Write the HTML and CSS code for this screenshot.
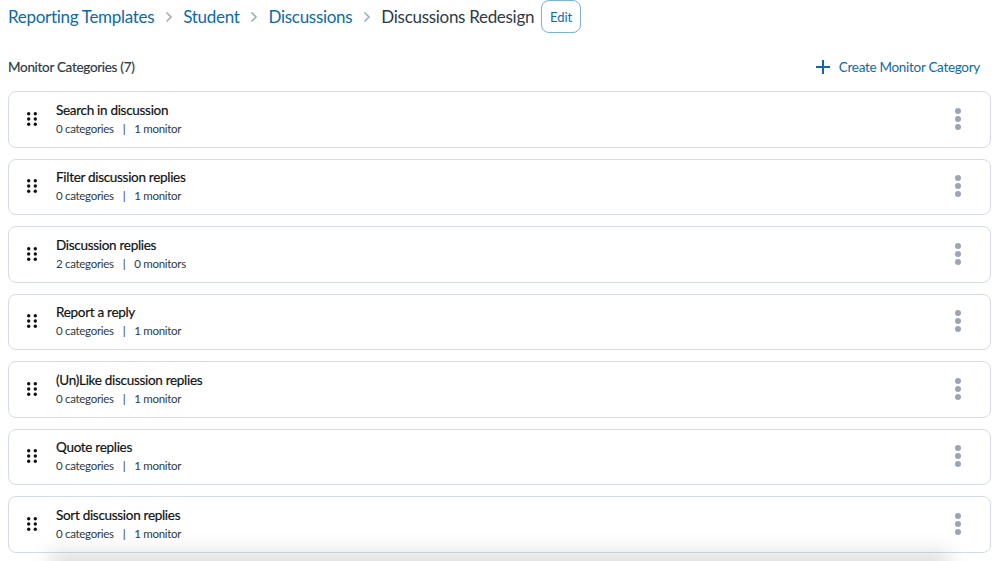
FILE: index.html
```html
<!DOCTYPE html>
<html>
<head>
  <title>Discussions Redesign</title>
  <link rel="stylesheet" href="styles.css">
</head>
<body>
  <div class="breadcrumbs">
    <a class="crumb" href="#">Reporting Templates</a>
    <svg class="chevron" width="8" height="12" viewBox="0 0 8 12"><path d="M1.5 1.5 6 6l-4.5 4.500" fill="none" stroke="#a3acb5" stroke-width="1.6"/></svg>
    <a class="crumb" href="#">Student</a>
    <svg class="chevron" width="8" height="12" viewBox="0 0 8 12"><path d="M1.5 1.5 6 6l-4.5 4.500" fill="none" stroke="#a3acb5" stroke-width="1.6"/></svg>
    <a class="crumb" href="#">Discussions</a>
    <svg class="chevron" width="8" height="12" viewBox="0 0 8 12"><path d="M1.5 1.5 6 6l-4.5 4.500" fill="none" stroke="#a3acb5" stroke-width="1.6"/></svg>
    <span class="crumb current">Discussions Redesign</span>
    <button class="edit-btn">Edit</button>
  </div>

  <div class="list-header">
    <span class="list-title">Monitor Categories (7)</span>
    <a class="create-link" href="#">
      <svg width="16" height="16" viewBox="0 0 16 16"><path d="M8 1v14M1 8h14" stroke="#0b6ba8" stroke-width="2" fill="none"/></svg>
      Create Monitor Category
    </a>
  </div>

  <div class="category-list">
    <div class="category-row">
      <svg class="drag" width="10" height="14" viewBox="0 0 10 14"><g fill="#111"><circle cx="1.7" cy="1.7" r="1.7"/><circle cx="8.3" cy="1.7" r="1.7"/><circle cx="1.7" cy="7" r="1.7"/><circle cx="8.3" cy="7" r="1.7"/><circle cx="1.7" cy="12.3" r="1.7"/><circle cx="8.3" cy="12.3" r="1.7"/></g></svg>
      <div class="category-info">
        <div class="category-name">Search in discussion</div>
        <div class="category-meta"><span>0 categories</span><span class="sep">|</span><span>1 monitor</span></div>
      </div>
      <div class="kebab"><i></i><i></i><i></i></div>
    </div>
    <div class="category-row">
      <svg class="drag" width="10" height="14" viewBox="0 0 10 14"><g fill="#111"><circle cx="1.7" cy="1.7" r="1.7"/><circle cx="8.3" cy="1.7" r="1.7"/><circle cx="1.7" cy="7" r="1.7"/><circle cx="8.3" cy="7" r="1.7"/><circle cx="1.7" cy="12.3" r="1.7"/><circle cx="8.3" cy="12.3" r="1.7"/></g></svg>
      <div class="category-info">
        <div class="category-name">Filter discussion replies</div>
        <div class="category-meta"><span>0 categories</span><span class="sep">|</span><span>1 monitor</span></div>
      </div>
      <div class="kebab"><i></i><i></i><i></i></div>
    </div>
    <div class="category-row">
      <svg class="drag" width="10" height="14" viewBox="0 0 10 14"><g fill="#111"><circle cx="1.7" cy="1.7" r="1.7"/><circle cx="8.3" cy="1.7" r="1.7"/><circle cx="1.7" cy="7" r="1.7"/><circle cx="8.3" cy="7" r="1.7"/><circle cx="1.7" cy="12.3" r="1.7"/><circle cx="8.3" cy="12.3" r="1.7"/></g></svg>
      <div class="category-info">
        <div class="category-name">Discussion replies</div>
        <div class="category-meta"><span>2 categories</span><span class="sep">|</span><span>0 monitors</span></div>
      </div>
      <div class="kebab"><i></i><i></i><i></i></div>
    </div>
    <div class="category-row">
      <svg class="drag" width="10" height="14" viewBox="0 0 10 14"><g fill="#111"><circle cx="1.7" cy="1.7" r="1.7"/><circle cx="8.3" cy="1.7" r="1.7"/><circle cx="1.7" cy="7" r="1.7"/><circle cx="8.3" cy="7" r="1.7"/><circle cx="1.7" cy="12.3" r="1.7"/><circle cx="8.3" cy="12.3" r="1.7"/></g></svg>
      <div class="category-info">
        <div class="category-name">Report a reply</div>
        <div class="category-meta"><span>0 categories</span><span class="sep">|</span><span>1 monitor</span></div>
      </div>
      <div class="kebab"><i></i><i></i><i></i></div>
    </div>
    <div class="category-row">
      <svg class="drag" width="10" height="14" viewBox="0 0 10 14"><g fill="#111"><circle cx="1.7" cy="1.7" r="1.7"/><circle cx="8.3" cy="1.7" r="1.7"/><circle cx="1.7" cy="7" r="1.7"/><circle cx="8.3" cy="7" r="1.7"/><circle cx="1.7" cy="12.3" r="1.7"/><circle cx="8.3" cy="12.3" r="1.7"/></g></svg>
      <div class="category-info">
        <div class="category-name">(Un)Like discussion replies</div>
        <div class="category-meta"><span>0 categories</span><span class="sep">|</span><span>1 monitor</span></div>
      </div>
      <div class="kebab"><i></i><i></i><i></i></div>
    </div>
    <div class="category-row">
      <svg class="drag" width="10" height="14" viewBox="0 0 10 14"><g fill="#111"><circle cx="1.7" cy="1.7" r="1.7"/><circle cx="8.3" cy="1.7" r="1.7"/><circle cx="1.7" cy="7" r="1.7"/><circle cx="8.3" cy="7" r="1.7"/><circle cx="1.7" cy="12.3" r="1.7"/><circle cx="8.3" cy="12.3" r="1.7"/></g></svg>
      <div class="category-info">
        <div class="category-name">Quote replies</div>
        <div class="category-meta"><span>0 categories</span><span class="sep">|</span><span>1 monitor</span></div>
      </div>
      <div class="kebab"><i></i><i></i><i></i></div>
    </div>
    <div class="category-row">
      <svg class="drag" width="10" height="14" viewBox="0 0 10 14"><g fill="#111"><circle cx="1.7" cy="1.7" r="1.7"/><circle cx="8.3" cy="1.7" r="1.7"/><circle cx="1.7" cy="7" r="1.7"/><circle cx="8.3" cy="7" r="1.7"/><circle cx="1.7" cy="12.3" r="1.7"/><circle cx="8.3" cy="12.3" r="1.7"/></g></svg>
      <div class="category-info">
        <div class="category-name">Sort discussion replies</div>
        <div class="category-meta"><span>0 categories</span><span class="sep">|</span><span>1 monitor</span></div>
      </div>
      <div class="kebab"><i></i><i></i><i></i></div>
    </div>
  </div>
  <div class="bottom-fade"></div>
</body>
</html>
```

FILE: styles.css
```css
body {
  font-family: Lato, 'Open Sans', sans-serif;
  background-color: #ffffff;
  color: #202e3a;
  margin: 0;
  padding: 0 8px;
  height: 561px;
  overflow: hidden;
  box-sizing: border-box;
}
a {
  color: #0b6ba8;
  text-decoration: none;
}
.breadcrumbs {
  display: flex;
  align-items: center;
  height: 33px;
}
.crumb {
  font-size: 17px;
  letter-spacing: -0.3px;
  white-space: nowrap;
}
.chevron {
  margin: 0 10.5px;
}
.current {
  color: #2d3b45;
}
.edit-btn {
  font-family: inherit;
  font-size: 13px;
  color: #0b6ba8;
  background-color: #ffffff;
  border: 1px solid #7eb1d2;
  border-radius: 8px;
  width: 40px;
  height: 33px;
  margin-left: 7px;
  padding: 0;
}
.list-header {
  display: flex;
  justify-content: space-between;
  align-items: center;
  margin-top: 23px;
  height: 21px;
  padding-right: 11px;
}
.list-title {
  font-size: 13.5px;
  letter-spacing: -0.3px;
  color: #2d3b45;
  -webkit-text-stroke: 0.2px #2d3b45;
}
.create-link {
  display: flex;
  align-items: center;
  gap: 8px;
  font-size: 13.5px;
  letter-spacing: -0.3px;
}
.category-list {
  display: flex;
  flex-direction: column;
  gap: 11px;
  margin-top: 14px;
}
.category-row {
  display: flex;
  align-items: center;
  height: 56.5px;
  box-sizing: border-box;
  border: 1px solid #d5dce6;
  border-radius: 8px;
  padding: 0 29px 1px 18px;
  background-color: #ffffff;
}
.drag {
  flex-shrink: 0;
}
.category-info {
  flex: 1;
  margin-left: 19px;
}
.category-name {
  font-size: 13.5px;
  line-height: 18px;
  letter-spacing: -0.3px;
  color: #111111;
  -webkit-text-stroke: 0.2px #111111;
}
.category-meta {
  font-size: 11.5px;
  line-height: 16px;
  letter-spacing: -0.3px;
  margin-top: 2px;
  color: #2d3b45;
}
.sep {
  margin: 0 9px;
}
.kebab {
  display: flex;
  flex-direction: column;
  gap: 2.2px;
}
.kebab i {
  display: block;
  width: 6px;
  height: 6px;
  border-radius: 50%;
  background-color: #9aa5b5;
}
.bottom-fade {
  position: absolute;
  left: 50px;
  right: 50px;
  top: 552px;
  height: 30px;
  pointer-events: none;
  background-color: rgba(0, 0, 0, 0.13);
  filter: blur(10px);
}
```
